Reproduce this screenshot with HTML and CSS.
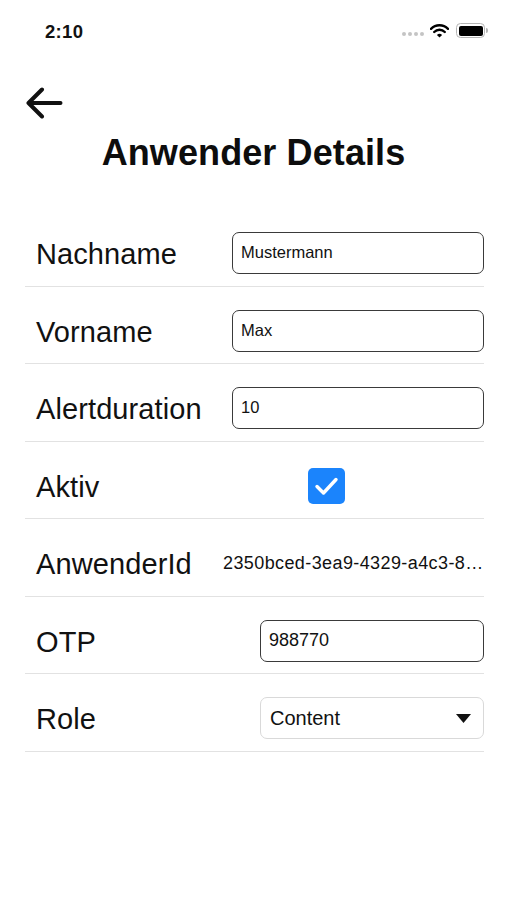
FILE: index.html
```html
<!DOCTYPE html>
<html lang="de">
<head>
<meta charset="utf-8">
<title>Anwender Details</title>
<link rel="stylesheet" href="styles.css">
</head>
<body>
<div class="screen">
  <div class="status">
    <span class="time">2:10</span>
    <div class="status-icons">
      <span class="dots"><i></i><i></i><i></i><i></i></span>
      <svg class="wifi" width="19" height="14" viewBox="0 0 19 14">
        <path d="M1 4.8 A12 12 0 0 1 18 4.8" fill="none" stroke="#000" stroke-width="2.4" stroke-linecap="round"/>
        <path d="M4.2 8 A7.5 7.5 0 0 1 14.8 8" fill="none" stroke="#000" stroke-width="2.4" stroke-linecap="round"/>
        <path d="M9.5 13.6 L6.9 10.9 A3.8 3.8 0 0 1 12.1 10.9 Z" fill="#000"/>
      </svg>
      <span class="battery"><span class="battery-fill"></span></span>
      <span class="battery-nub"></span>
    </div>
  </div>

  <div class="nav">
    <svg class="back" width="38" height="32" viewBox="0 0 38 32">
      <path d="M3.5 16 H35.5 M17 2.5 L3.5 16 L17 29.5" fill="none" stroke="#111" stroke-width="4" stroke-linecap="round" stroke-linejoin="round"/>
    </svg>
  </div>

  <h1 class="title">Anwender Details</h1>

  <div class="form">
    <div class="row">
      <span class="label w-207">Nachname</span>
      <div class="field">Mustermann</div>
    </div>
    <div class="row">
      <span class="label w-207">Vorname</span>
      <div class="field">Max</div>
    </div>
    <div class="row">
      <span class="label w-207">Alertduration</span>
      <div class="field">10</div>
    </div>
    <div class="row">
      <span class="label w-283">Aktiv</span>
      <span class="checkbox">
        <svg width="37" height="36" viewBox="0 0 37 36">
          <path d="M9 18.5 L15.5 25 L28 11.5" fill="none" stroke="#fff" stroke-width="3.4" stroke-linecap="round" stroke-linejoin="round"/>
        </svg>
      </span>
    </div>
    <div class="row">
      <span class="label w-198">AnwenderId</span>
      <span class="id-text">2350bced-3ea9-4329-a4c3-8…</span>
    </div>
    <div class="row">
      <span class="label w-235">OTP</span>
      <div class="field field-lg">988770</div>
    </div>
    <div class="row">
      <span class="label w-235">Role</span>
      <div class="select">
        <span>Content</span>
        <svg class="caret" width="15" height="9" viewBox="0 0 15 9"><path d="M0 0 H15 L7.5 9 Z" fill="#111"/></svg>
      </div>
    </div>
  </div>
</div>
</body>
</html>
```

FILE: styles.css
```css
* { box-sizing: border-box; }

html, body {
  margin: 0;
  padding: 0;
  background: #fff;
}

body {
  font-family: "Liberation Sans", Arial, sans-serif;
  color: #111;
}

.screen {
  width: 507px;
  min-height: 900px;
  background: #fff;
}

.status {
  height: 62px;
  display: flex;
  justify-content: space-between;
  align-items: flex-start;
  padding: 22px 19px 0 45px;
}

.time {
  font-size: 18.5px;
  font-weight: 700;
  line-height: 20px;
  letter-spacing: 0.3px;
}

.status-icons {
  display: flex;
  align-items: center;
  margin-top: 1px;
}

.dots {
  display: flex;
  gap: 2px;
  margin-right: 6px;
  margin-top: 6px;
}

.dots i {
  display: block;
  width: 4px;
  height: 4px;
  border-radius: 50%;
  background: #c4c4c4;
}

.wifi {
  display: block;
  margin-right: 7px;
}

.battery {
  display: block;
  width: 29px;
  height: 15px;
  border: 1.5px solid #b5b5b5;
  border-radius: 4.5px;
  padding: 1.5px;
}

.battery-fill {
  display: block;
  width: 100%;
  height: 100%;
  background: #000;
  border-radius: 2px;
}

.battery-nub {
  display: block;
  width: 2px;
  height: 5px;
  background: #b5b5b5;
  border-radius: 0 2px 2px 0;
  margin-left: 1px;
}

.nav {
  height: 69px;
  padding: 25px 0 0 25px;
}

.back {
  display: block;
}

.title {
  margin: 0;
  font-size: 36px;
  font-weight: 700;
  line-height: 44px;
  text-align: center;
  color: #0d0d0d;
  letter-spacing: 0.1px;
}

.form {
  margin: 34px 23px 0 25px;
}

.row {
  display: flex;
  align-items: center;
  padding: 23px 0 11px;
  height: 77.5px;
  border-bottom: 1.5px solid #e2e2e2;
}

.label {
  flex: 0 0 auto;
  padding-left: 11px;
  padding-top: 2px;
  font-size: 29px;
  line-height: 40px;
  color: #111;
  letter-spacing: 0.1px;
}

.w-207 { flex-basis: 207px; }
.w-198 { flex-basis: 198px; }
.w-235 { flex-basis: 235px; }
.w-283 { flex-basis: 283px; }

.field {
  flex: 1;
  height: 42px;
  border: 1.6px solid #3a3a3a;
  border-radius: 7px;
  padding-left: 8px;
  font-size: 16.5px;
  line-height: 39px;
  color: #111;
}

.field-lg {
  font-size: 18px;
}

.checkbox {
  display: block;
  width: 37px;
  height: 36px;
  border-radius: 5px;
  background: #1b84fc;
}

.checkbox svg {
  display: block;
}

.id-text {
  flex: 1;
  font-size: 18px;
  letter-spacing: 0.4px;
  line-height: 42px;
  white-space: nowrap;
  overflow: hidden;
  color: #111;
}

.select {
  flex: 1;
  height: 42px;
  display: flex;
  align-items: center;
  justify-content: space-between;
  border: 1px solid #d9d9d9;
  border-radius: 7px;
  padding: 0 12px 0 9px;
  font-size: 20px;
  color: #111;
}

.caret {
  display: block;
}
```
